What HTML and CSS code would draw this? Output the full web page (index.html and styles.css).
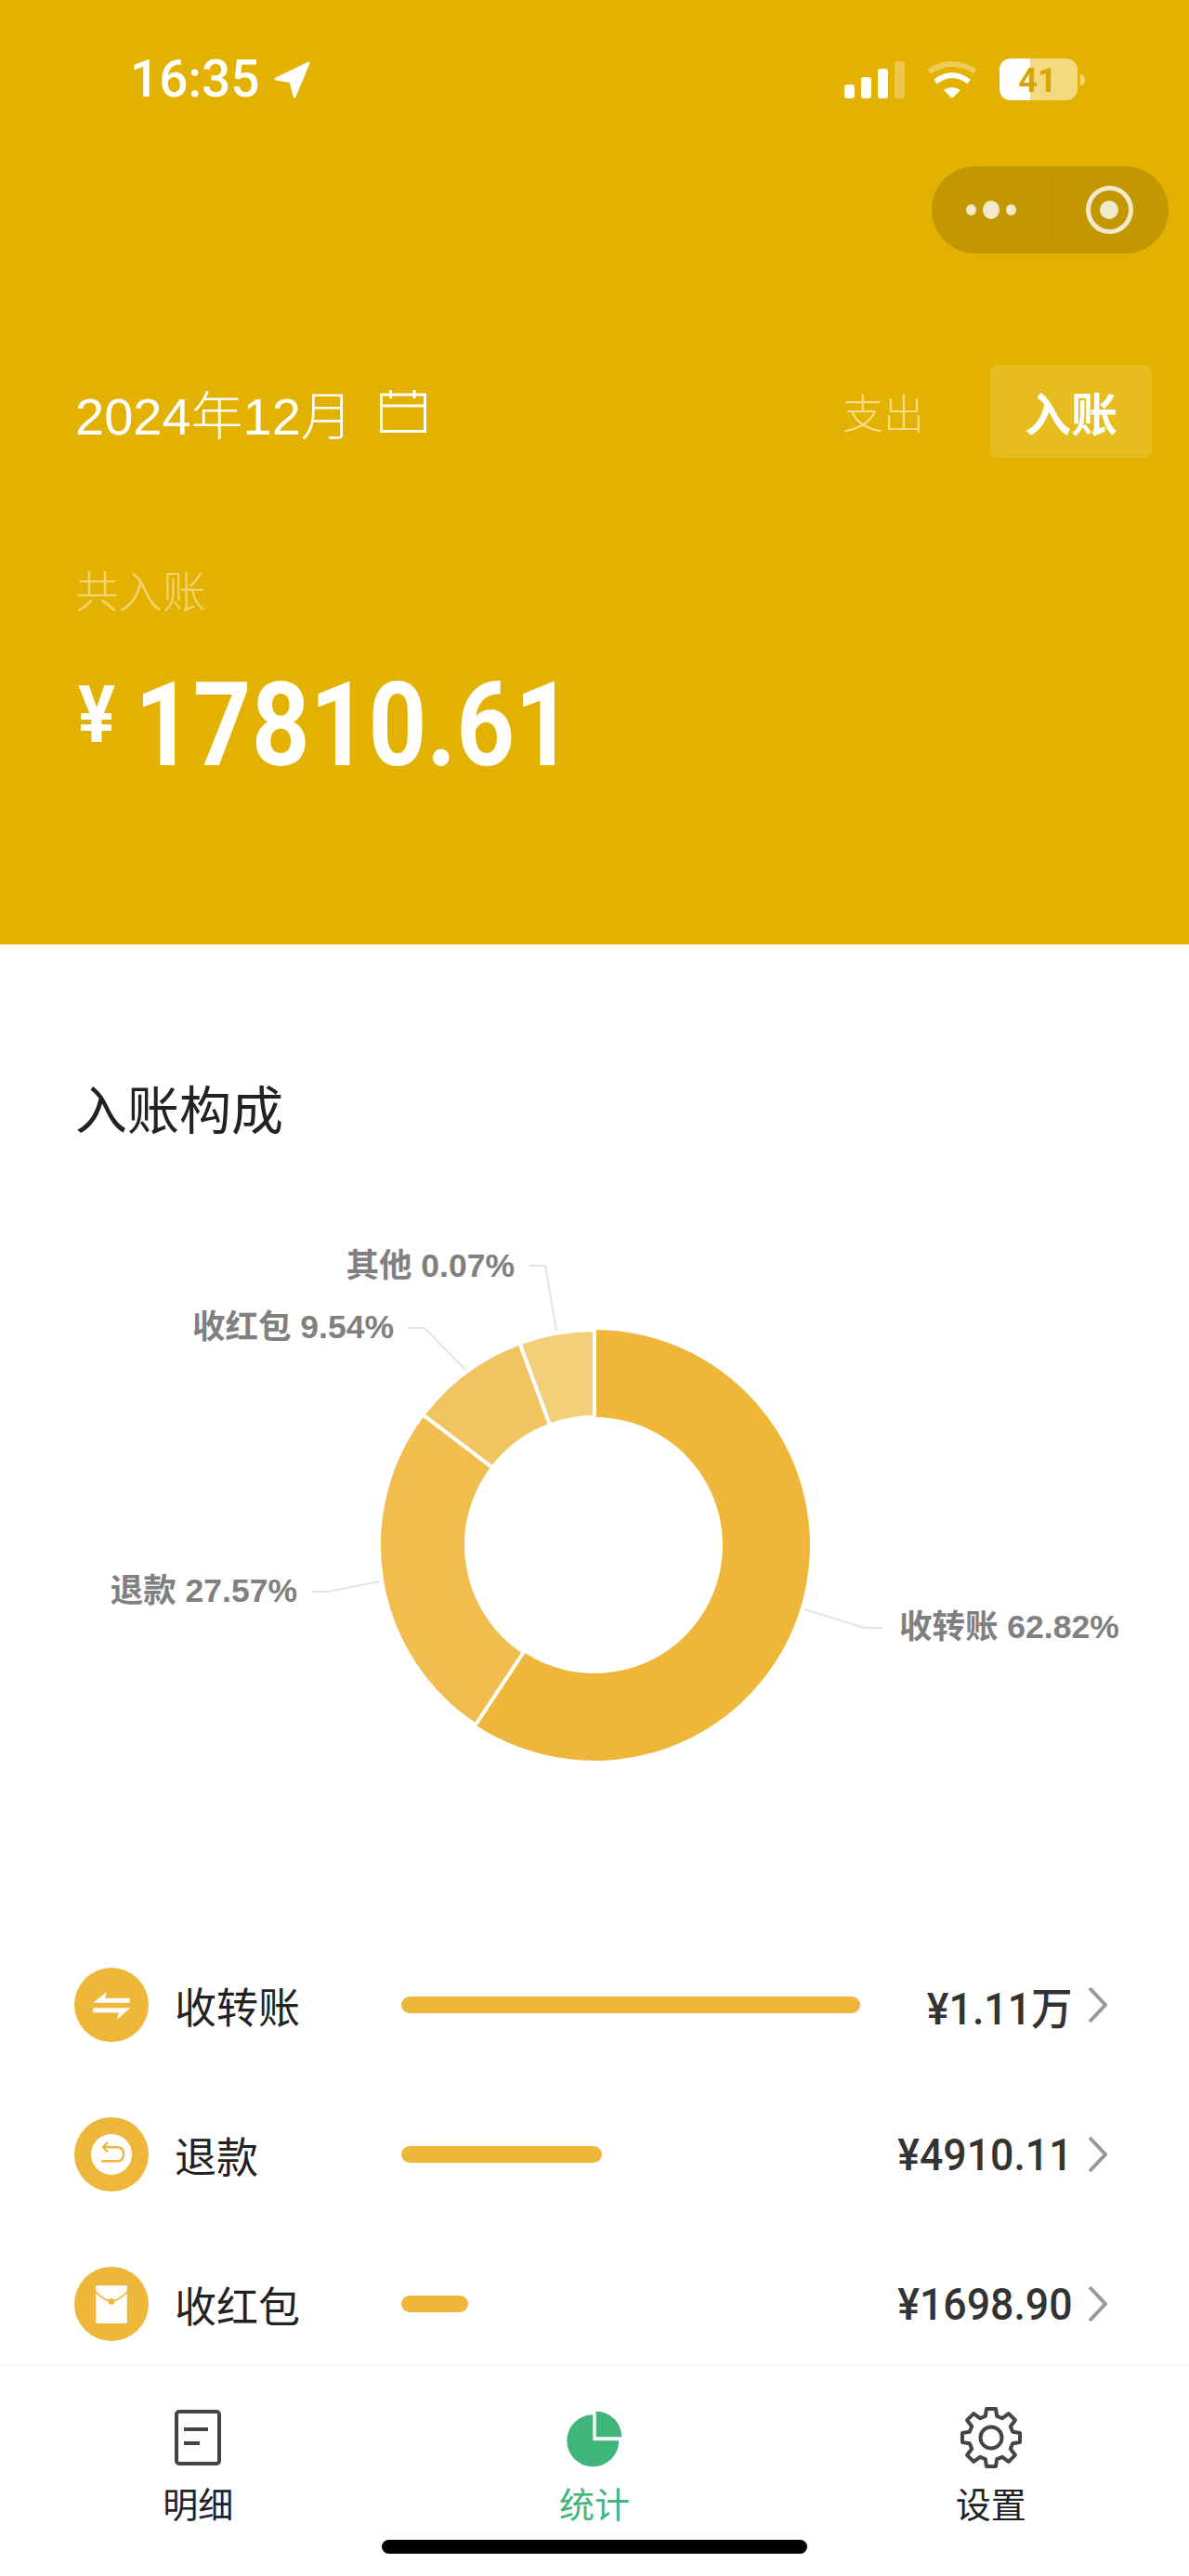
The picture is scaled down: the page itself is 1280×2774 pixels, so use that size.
FILE: index.html
```html
<!DOCTYPE html>
<html lang="zh-CN">
<head>
    <meta charset="UTF-8">
    <meta name="viewport" content="width=device-width, initial-scale=1.0">
    <title>账单统计</title>
    <link rel="stylesheet" href="styles.css">
</head>
<body>

    <!-- Yellow header -->
    <div class="header">
        <div class="status-bar">
            <div class="status-left">
                <span class="time">16:35</span>
                <svg class="location" width="40" height="40" viewBox="0 0 40 40"><polygon points="37,2 2,19 18,21.5 22,38" fill="#fff" stroke="#fff" stroke-width="3" stroke-linejoin="round"/></svg>
            </div>
            <div class="status-right">
                <svg width="65" height="40" viewBox="0 0 65 40">
                    <rect x="0" y="25" width="11" height="15" rx="3" fill="#fff"/>
                    <rect x="18" y="17" width="11" height="23" rx="3" fill="#fff"/>
                    <rect x="36" y="8" width="11" height="32" rx="3" fill="#fff"/>
                    <rect x="54" y="0" width="11" height="40" rx="3" fill="#fff" opacity="0.3"/>
                </svg>
                <svg width="56" height="40" viewBox="0 0 56 40">
                    <path d="M3,11 Q28,-5 53,11" fill="none" stroke="#fff" stroke-width="6" opacity="0.35"/>
                    <path d="M10,22 Q28,8 46,22" fill="none" stroke="#fff" stroke-width="6"/>
                    <path d="M19,31 Q28,25 37,31 L28,40 Z" fill="#fff"/>
                </svg>
                <svg width="92" height="45" viewBox="0 0 92 45">
                    <rect x="0" y="0" width="84" height="45" rx="12" fill="#f3d97f"/>
                    <path d="M12,0 H33 V45 H12 A12,12 0 0 1 0,33 V12 A12,12 0 0 1 12,0 Z" fill="#fff"/>
                    <path d="M87,17 A5,6 0 0 1 87,29 Z" fill="#f3d97f"/>
                    <text class="battery-text" x="41" y="36" text-anchor="middle">41</text>
                </svg>
            </div>
        </div>

        <div class="capsule">
            <div class="capsule-part">
                <span class="dot"></span><span class="dot dot-big"></span><span class="dot"></span>
            </div>
            <div class="capsule-part capsule-close">
                <span class="record"><span class="record-inner"></span></span>
            </div>
        </div>

        <div class="filter-row">
            <div class="date">
                <span>2024年12月</span>
                <svg width="50" height="46" viewBox="0 0 50 46" fill="none" stroke="#fff" stroke-width="3">
                    <rect x="1.5" y="5" width="47" height="39.5"/>
                    <path d="M1.5,17 H48.5 M11.5,0 V9 M37,0 V9"/>
                </svg>
            </div>
            <div class="type-switch">
                <span class="type-item">支出</span>
                <span class="type-item type-active">入账</span>
            </div>
        </div>

        <div class="total-label">共入账</div>
        <div class="total-amount">
            <span class="yen">¥</span><span class="number">17810.61</span>
        </div>
    </div>

    <!-- Donut chart -->
    <div class="section-title">入账构成</div>
    <svg class="chart" width="1280" height="580" viewBox="0 1330 1280 580">
        <g transform="translate(640 1664)" stroke="#fff" stroke-width="4">
            <path fill="#efb73a" d="M0,-232 A232,232 0 1 1 -128.1,193.5 L-76.2,115.1 A138,138 0 1 0 0,-138 Z" stroke="none"/>
            <path fill="#f0bd4e" d="M-128.1,193.5 A232,232 0 0 1 -184.6,-140.6 L-109.8,-83.6 A138,138 0 0 0 -76.2,115.1 Z"/>
            <path fill="#f1c460" d="M-184.6,-140.6 A232,232 0 0 1 -80.5,-217.6 L-47.9,-129.4 A138,138 0 0 0 -109.8,-83.6 Z"/>
            <path fill="#f4cf7a" d="M-80.5,-217.6 A232,232 0 0 1 0,-232 L0,-138 A138,138 0 0 0 -47.9,-129.4 Z"/>
        </g>
        <g class="leader">
            <polyline points="570,1363 587,1363 599,1433"/>
            <polyline points="439,1430 457,1430 501,1475"/>
            <polyline points="336,1714 353,1714 408,1703"/>
            <polyline points="866,1733 931,1753 950,1753"/>
        </g>
        <text class="chart-label" x="554" y="1375" text-anchor="end">其他 0.07%</text>
        <text class="chart-label" x="424" y="1441" text-anchor="end">收红包 9.54%</text>
        <text class="chart-label" x="320" y="1725" text-anchor="end">退款 27.57%</text>
        <text class="chart-label" x="968" y="1764">收转账 62.82%</text>
    </svg>

    <!-- Category list -->
    <div class="list">
        <div class="row">
            <svg class="row-icon" width="80" height="80" viewBox="0 0 80 80">
                <circle cx="40" cy="40" r="40" fill="#efb73a"/>
                <polygon points="20.3,37.7 34.7,26 33,32.7 59.7,32.7 59.7,37.7" fill="#fff"/>
                <polygon points="20.3,43.3 60.3,43.3 45.7,56 48,48.3 20.3,48.3" fill="#fff"/>
            </svg>
            <span class="row-name">收转账</span>
            <div class="bar-track"><div class="bar" style="width: 494px"></div></div>
            <span class="row-amount">¥1.11万</span>
            <svg class="chevron" width="21" height="40" viewBox="0 0 21 40"><polyline points="2,2 19,20 2,38"/></svg>
        </div>
        <div class="row">
            <svg class="row-icon" width="80" height="80" viewBox="0 0 80 80">
                <circle cx="40" cy="40" r="40" fill="#efb73a"/>
                <circle cx="40" cy="40" r="22" fill="#fff"/>
                <path d="M36,27 L31,32.3 L36,37.5 M31,32.3 H46 Q53,32.3 53,39.5 Q53,47.3 46,47.3 H29" fill="none" stroke="#efb73a" stroke-width="2.4"/>
            </svg>
            <span class="row-name">退款</span>
            <div class="bar-track"><div class="bar" style="width: 216px"></div></div>
            <span class="row-amount">¥4910.11</span>
            <svg class="chevron" width="21" height="40" viewBox="0 0 21 40"><polyline points="2,2 19,20 2,38"/></svg>
        </div>
        <div class="row">
            <svg class="row-icon" width="80" height="80" viewBox="0 0 80 80">
                <circle cx="40" cy="40" r="40" fill="#efb73a"/>
                <rect x="23.3" y="20" width="33.4" height="41" fill="#fff"/>
                <path d="M23.3,26.7 Q31,36 40,37.3 Q49,36 56.7,26.7" fill="none" stroke="#efb73a" stroke-width="1.5"/>
                <circle cx="40" cy="37.3" r="3.4" fill="#efb73a"/>
            </svg>
            <span class="row-name">收红包</span>
            <div class="bar-track"><div class="bar" style="width: 72px"></div></div>
            <span class="row-amount">¥1698.90</span>
            <svg class="chevron" width="21" height="40" viewBox="0 0 21 40"><polyline points="2,2 19,20 2,38"/></svg>
        </div>
    </div>

    <!-- Tab bar -->
    <div class="tabbar">
        <div class="tabs">
            <div class="tab">
                <svg class="tab-icon" width="54" height="66" viewBox="0 0 54 66" fill="none" stroke="#444" stroke-width="4">
                    <rect x="4" y="5" width="46" height="56" rx="3"/>
                    <path d="M12,24 H38 M12,39 H29"/>
                </svg>
                <span class="tab-label">明细</span>
            </div>
            <div class="tab tab-active">
                <svg class="tab-icon" width="60" height="66" viewBox="0 0 60 66" fill="#3fb57a">
                    <path d="M28.3,8.3 A28,28 0 1 0 56.3,36.3 L28.3,36.3 Z"/>
                    <path d="M31.7,4.7 A27.6,27.6 0 0 1 59.3,32.3 L31.7,32.3 Z"/>
                </svg>
                <span class="tab-label">统计</span>
            </div>
            <div class="tab">
                <svg class="tab-icon" width="66" height="66" viewBox="-33 -33 66 66" fill="none" stroke="#444" stroke-width="4" stroke-linejoin="round">
                    <polygon points="-5,-31 5,-31 6.21,-23.18 12,-20.78 18.81,-25.89 25.89,-18.81 20.78,-12 23.18,-6.21 31,-5 31,5 23.18,6.21 20.78,12 25.89,18.81 18.81,25.89 12,20.78 6.21,23.18 5,31 -5,31 -6.21,23.18 -12,20.78 -18.81,25.89 -25.89,18.81 -20.78,12 -23.18,6.21 -31,5 -31,-5 -23.18,-6.21 -20.78,-12 -25.89,-18.81 -18.81,-25.89 -12,-20.78 -6.21,-23.18"/>
                    <circle cx="0" cy="0" r="11.5"/>
                </svg>
                <span class="tab-label">设置</span>
            </div>
        </div>
        <div class="home-indicator"></div>
    </div>

</body>
</html>
```

FILE: styles.css
```css
/* General Layout Styles */
body {
    margin: 0;
    background-color: #fff;
    color: #222;
    font-family: "Liberation Sans", "Noto Sans CJK SC", sans-serif;
}

/* Header */
.header {
    box-sizing: border-box;
    height: 1017px;
    padding-top: 63px;
    background-color: #e3b100;
    color: #fff;
}

.status-bar {
    display: flex;
    justify-content: space-between;
    align-items: center;
    height: 45px;
    padding: 0 112px 0 140px;
}

.status-left {
    display: flex;
    align-items: center;
}

.time {
    width: 140px;
    font-family: Roboto, sans-serif;
    font-size: 55px;
    font-weight: 500;
    line-height: 45px;
    white-space: nowrap;
}

.location {
    margin-left: 15px;
}

.status-right {
    display: flex;
    align-items: center;
    gap: 23px;
}

.battery-text {
    fill: #d8a500;
    font-family: Roboto, sans-serif;
    font-size: 36px;
    font-weight: 700;
}

/* Mini program capsule */
.capsule {
    display: flex;
    width: 255px;
    height: 94px;
    margin: 71px 22px 0 auto;
    border-radius: 47px;
    background-color: #c29700;
}

.capsule-part {
    display: flex;
    flex: 1;
    justify-content: center;
    align-items: center;
    gap: 7px;
}

.capsule-close {
    position: relative;
}

.capsule-close::before {
    content: "";
    position: absolute;
    left: 0;
    top: 13px;
    bottom: 16px;
    width: 1px;
    background-color: #bb9203;
}

.dot {
    width: 11px;
    height: 12px;
    border-radius: 50%;
    background-color: #f2e8cc;
}

.dot-big {
    width: 18px;
    height: 20px;
}

.record {
    display: flex;
    justify-content: center;
    align-items: center;
    box-sizing: border-box;
    width: 51px;
    height: 52px;
    border: 5px solid #f2e8cc;
    border-radius: 50%;
}

.record-inner {
    width: 20px;
    height: 20px;
    border-radius: 50%;
    background-color: #f2e8cc;
}

/* Date and type filter */
.filter-row {
    display: flex;
    justify-content: space-between;
    align-items: center;
    height: 100px;
    margin-top: 120px;
    padding: 0 40px 0 81px;
}

.date {
    display: flex;
    align-items: center;
    gap: 29px;
    font-size: 56px;
    font-weight: 300;
}

.type-switch {
    display: flex;
    align-items: center;
}

.type-item {
    font-size: 44px;
    font-weight: 300;
    color: #f5db8a;
}

.type-active {
    display: flex;
    justify-content: center;
    align-items: center;
    width: 174px;
    height: 100px;
    margin-left: 71px;
    border-radius: 8px;
    background-color: #e6bc1f;
    color: #fff;
    font-size: 50px;
    font-weight: 700;
}

/* Total */
.total-label {
    margin-top: 119px;
    padding-left: 81px;
    font-size: 47px;
    font-weight: 300;
    line-height: 52px;
    color: #f3d473;
}

.total-amount {
    display: flex;
    align-items: flex-start;
    width: 640px;
    height: 90px;
    margin: 72px 0 0 84px;
    font-family: Roboto, sans-serif;
    font-weight: 700;
    transform: scaleX(0.87);
    transform-origin: left top;
}

.yen {
    width: 70px;
    margin-top: 3px;
    font-size: 86px;
    line-height: 61px;
}

.number {
    font-size: 126px;
    line-height: 90px;
}

/* Donut chart */
.section-title {
    margin-top: 148px;
    padding-left: 81px;
    font-size: 56px;
    line-height: 64px;
}

.chart {
    display: block;
    margin-top: 101px;
}

.leader polyline {
    fill: none;
    stroke: #e4e4e4;
    stroke-width: 2;
}

.chart-label {
    fill: #808080;
    font-size: 35.5px;
    font-weight: 700;
}

/* Category list */
.list {
    display: flex;
    flex-direction: column;
    gap: 81px;
    margin-top: 209px;
    padding: 0 88px 0 80px;
}

.row {
    display: flex;
    align-items: center;
    height: 80px;
}

.row-icon {
    flex-shrink: 0;
}

.row-name {
    width: 244px;
    margin-left: 28px;
    font-size: 45px;
}

.bar-track {
    width: 494px;
}

.bar {
    height: 18px;
    border-radius: 9px;
    background-color: #efb73a;
}

.row-amount {
    margin-left: auto;
    font-family: Roboto, "Noto Sans CJK SC", sans-serif;
    font-size: 48px;
    font-weight: 500;
    color: #333;
    transform: scaleX(0.93);
    transform-origin: right center;
}

.chevron {
    margin-left: 16px;
}

.chevron polyline {
    fill: none;
    stroke: #999;
    stroke-width: 4;
}

/* Tab bar */
.tabbar {
    display: flex;
    flex-direction: column;
    align-items: center;
    margin-top: 25px;
    border-top: 2px solid #f7f7f7;
}

.tabs {
    display: flex;
    width: 100%;
    padding-top: 44px;
}

.tab {
    display: flex;
    flex: 1;
    flex-direction: column;
    align-items: center;
}

.tab-label {
    margin-top: 16px;
    font-size: 38px;
    line-height: 48px;
}

.tab-active .tab-label {
    color: #41b57c;
}

.home-indicator {
    width: 458px;
    height: 15px;
    margin-top: 13px;
    border-radius: 8px;
    background-color: #000;
}
```
